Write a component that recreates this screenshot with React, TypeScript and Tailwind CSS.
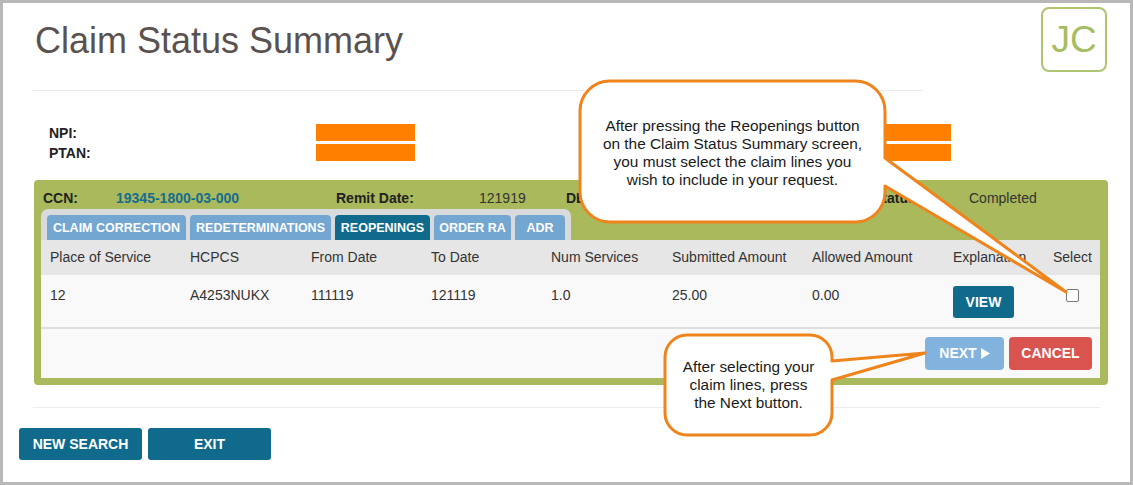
import React from "react";

const tabs = [
  { label: "CLAIM CORRECTION", w: "w-[139px]", active: false },
  { label: "REDETERMINATIONS", w: "w-[141px]", active: false },
  { label: "REOPENINGS", w: "w-[95px]", active: true },
  { label: "ORDER RA", w: "w-[77px]", active: false },
  { label: "ADR", w: "w-[50px]", active: false },
];

const cols = [
  { title: "Place of Service", w: "w-[140px]" },
  { title: "HCPCS", w: "w-[121px]" },
  { title: "From Date", w: "w-[120px]" },
  { title: "To Date", w: "w-[120px]" },
  { title: "Num Services", w: "w-[121px]" },
  { title: "Submitted Amount", w: "w-[140px]" },
  { title: "Allowed Amount", w: "w-[141px]" },
  { title: "Explanation", w: "w-[100px]" },
  { title: "Select", w: "w-[56px]" },
];

const row = ["12", "A4253NUKX", "111119", "121119", "1.0", "25.00", "0.00"];

export default function App() {
  return (
    <div
      className="relative w-[1133px] h-[485px] overflow-hidden bg-white border-[3px] border-[#b8b8b8] text-[#333]"
      style={{ fontFamily: '"Liberation Sans", Arial, sans-serif' }}
    >
      {/* header */}
      <div className="flex justify-between pl-[32px] pr-[23px] pt-[4px]">
        <h1 className="mt-[16px] text-[36px] leading-none text-[#5a524e]">Claim Status Summary</h1>
        <div className="w-[66px] h-[65px] rounded-[8px] border-2 border-[#afc470] flex items-center justify-center text-[37px] text-[#a6bd62]">
          JC
        </div>
      </div>

      <div className="ml-[30px] mt-[18px] w-[890px] h-px bg-[#ececec]" />

      {/* NPI / PTAN */}
      <div className="mt-[32px] ml-[46px] text-[14px] font-bold text-[#222]">
        <div className="flex h-[20px] items-start">
          <span className="w-[267px] leading-[20px]">NPI:</span>
          <div className="mt-[1px] w-[99px] h-[17px] bg-[#ff8000]" />
          <div className="ml-[440px] mt-[1px] w-[96px] h-[17px] bg-[#ff8000]" />
        </div>
        <div className="flex h-[20px] items-start">
          <span className="w-[267px] leading-[20px]">PTAN:</span>
          <div className="mt-[1px] w-[99px] h-[17px] bg-[#ff8000]" />
          <div className="ml-[440px] mt-[1px] w-[96px] h-[17px] bg-[#ff8000]" />
        </div>
      </div>

      {/* green panel */}
      <div className="mt-[17px] ml-[31px] w-[1074px] rounded-[4px] bg-[#a9b95c] pt-[9px] pb-[7px]">
        <div className="flex h-[18px] items-center pl-[9px] text-[14px] leading-[18px]">
          <span className="w-[73px] font-bold text-[#222]">CCN:</span>
          <span className="w-[220px] font-bold text-[#176d8e]">19345-1800-03-000</span>
          <span className="w-[143px] font-bold text-[#222]">Remit Date:</span>
          <span className="w-[87px]">121919</span>
          <span className="w-[307px] font-bold text-[#222]">DEN Date:</span>
          <span className="w-[96px] font-bold text-[#222]">Status:</span>
          <span>Completed</span>
        </div>

        {/* tabs */}
        <div className="mt-[2px] ml-[7px] w-[530px] rounded-t-[7px] bg-[#d8dadb] px-[6px] pt-[6px] flex gap-[4px]">
          {tabs.map((t) => (
            <div
              key={t.label}
              className={`${t.w} h-[25px] pt-[2px] rounded-t-[4px] flex items-center justify-center text-[12.5px] font-bold text-white ${
                t.active ? "bg-[#0f6a8c]" : "bg-[#73a6d0]"
              }`}
            >
              {t.label}
            </div>
          ))}
        </div>

        {/* table */}
        <div className="ml-[7px] mr-[8px] bg-[#f9f9f9]">
          <div className="flex h-[35px] items-center bg-[#e6e6e6] text-[14px]">
            {cols.map((c) => (
              <div key={c.title} className={`${c.w} pl-[9px]`}>
                {c.title}
              </div>
            ))}
          </div>
          <div className="flex h-[52px] text-[14px]">
            {row.map((v, i) => (
              <div key={i} className={`${cols[i].w} pl-[9px] pt-[12px] leading-[16px]`}>
                {v}
              </div>
            ))}
            <div className="w-[100px] pl-[9px] pt-[11px]">
              <button className="w-[61px] h-[32px] rounded-[3px] bg-[#0f6a8c] text-white font-bold text-[14px]">VIEW</button>
            </div>
            <div className="w-[56px] flex justify-center pt-[14px]">
              <div className="w-[13px] h-[13px] border border-[#777] bg-white rounded-[2px]" />
            </div>
          </div>
          <div className="h-[2px] bg-[#dedede]" />
          <div className="flex h-[49px] justify-end gap-[5px] pr-[8px] pt-[8px]">
            <button className="w-[79px] h-[33px] rounded-[4px] bg-[#82b2de] text-white font-bold text-[14px] flex items-center justify-center gap-[4px]">
              NEXT
              <svg width="9" height="11" viewBox="0 0 9 11">
                <polygon points="0,0 9,5.5 0,11" fill="white" />
              </svg>
            </button>
            <button className="w-[83px] h-[33px] rounded-[4px] bg-[#d9534f] text-white font-bold text-[14px]">CANCEL</button>
          </div>
        </div>
      </div>

      <div className="ml-[30px] mt-[22px] w-[1067px] h-px bg-[#ececec]" />

      <div className="mt-[20px] ml-[16px] flex gap-[6px]">
        <button className="w-[123px] h-[32px] rounded-[3px] bg-[#0f6a8c] text-white font-bold text-[14px]">NEW SEARCH</button>
        <button className="w-[123px] h-[32px] rounded-[3px] bg-[#0f6a8c] text-white font-bold text-[14px]">EXIT</button>
      </div>

      {/* callouts overlay */}
      <div className="pointer-events-none absolute -top-[3px] -left-[3px] w-[1133px] h-[485px]">
        <svg className="absolute inset-0" width="1133" height="485" viewBox="0 0 1133 485">
          <path
            d="M 610 81 H 855 A 30 30 0 0 1 885 111 V 158 L 1066 292 L 885 186 V 192 A 30 30 0 0 1 855 222 H 610 A 30 30 0 0 1 580 192 V 111 A 30 30 0 0 1 610 81 Z"
            fill="white"
            stroke="#f0841c"
            strokeWidth="3"
            strokeLinejoin="round"
          />
          <path
            d="M 687 335 H 810 A 22 22 0 0 1 832 357 V 361 L 925 353 L 832 380 V 413 A 22 22 0 0 1 810 435 H 687 A 22 22 0 0 1 665 413 V 357 A 22 22 0 0 1 687 335 Z"
            fill="white"
            stroke="#f0841c"
            strokeWidth="3"
            strokeLinejoin="round"
          />
        </svg>
        <div className="absolute left-[580px] top-[117px] w-[305px] text-center text-[15.4px] leading-[18px] text-[#1a1a1a]">
          After pressing the Reopenings button
          <br />
          on the Claim Status Summary screen,
          <br />
          you must select the claim lines you
          <br />
          wish to include in your request.
        </div>
        <div className="absolute left-[665px] top-[358px] w-[167px] text-center text-[15.4px] leading-[18px] text-[#1a1a1a]">
          After selecting your
          <br />
          claim lines, press
          <br />
          the Next button.
        </div>
      </div>
    </div>
  );
}
